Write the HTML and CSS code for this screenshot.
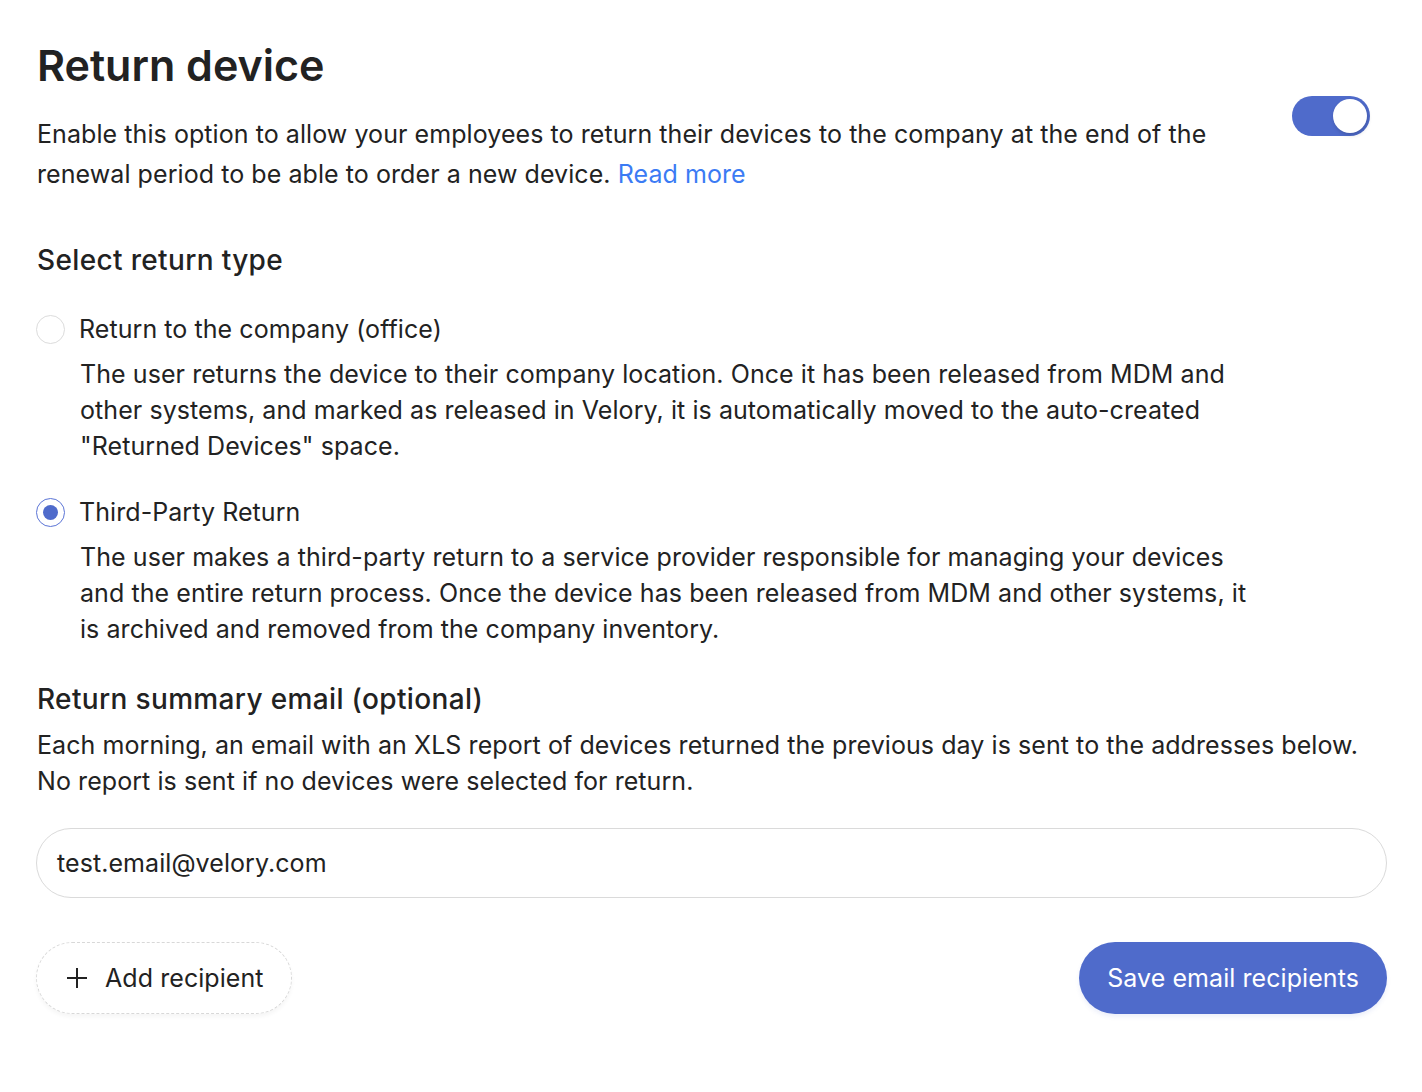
FILE: index.html
```html
<!DOCTYPE html>
<html lang="en">
<head>
<meta charset="utf-8">
<title>Return device</title>
<link rel="stylesheet" href="styles.css">
</head>
<body>
<main class="page">
  <h1 class="title">Return device</h1>
  <div class="intro">
    <p class="intro-text">Enable this option to allow your employees to return their devices to the company at the end of the renewal period to be able to order a new device. <a href="#" class="link">Read more</a></p>
    <span class="toggle on"><span class="knob"></span></span>
  </div>

  <h2 class="section-title">Select return type</h2>

  <div class="options">
    <div class="option">
      <div class="option-head">
        <span class="radio"></span>
        <span class="option-label">Return to the company (office)</span>
      </div>
      <p class="option-desc">The user returns the device to their company location. Once it has been released from MDM and other systems, and marked as released in Velory, it is automatically moved to the auto-created "Returned Devices" space.</p>
    </div>
    <div class="option">
      <div class="option-head">
        <span class="radio checked"></span>
        <span class="option-label">Third-Party Return</span>
      </div>
      <p class="option-desc">The user makes a third-party return to a service provider responsible for managing your devices and the entire return process. Once the device has been released from MDM and other systems, it is archived and removed from the company inventory.</p>
    </div>
  </div>

  <h2 class="section-title email-title">Return summary email (optional)</h2>
  <p class="email-text">Each morning, an email with an XLS report of devices returned the previous day is sent to the addresses below. No report is sent if no devices were selected for return.</p>

  <div class="input">test.email@velory.com</div>

  <div class="actions">
    <button class="btn-add" type="button">
      <svg class="plus" width="22" height="22" viewBox="0 0 22 22" aria-hidden="true"><path d="M11 1v20M1 11h20" stroke="#222" stroke-width="2" fill="none"/></svg>
      <span>Add recipient</span>
    </button>
    <button class="btn-save" type="button">Save email recipients</button>
  </div>
</main>
</body>
</html>
```
FILE: styles.css
```css
* { box-sizing: border-box; }
html, body { margin: 0; padding: 0; background: #fff; }
body {
  font-family: Inter, "Noto Sans", "Liberation Sans", sans-serif;
  color: #222;
}
.page {
  padding: 36px 35px 40px 37px;
}
.title {
  margin: 0;
  font-size: 43px;
  line-height: 58px;
  font-weight: 600;
  letter-spacing: 0;
}
.intro {
  display: flex;
  justify-content: space-between;
  align-items: flex-start;
  margin-top: 20px;
}
.intro-text {
  margin: 0;
  max-width: 1200px;
  font-size: 25px;
  letter-spacing: 0.07px;
  line-height: 40px;
}
.link { color: #3b7bf4; text-decoration: none; }
.toggle {
  flex: none;
  width: 78px;
  height: 40px;
  border-radius: 20px;
  background: #4f6bcb;
  display: flex;
  align-items: center;
  justify-content: flex-end;
  padding: 3px;
  margin-top: -18px;
  margin-right: 17px;
}
.knob {
  width: 34px;
  height: 34px;
  border-radius: 50%;
  background: #fff;
  box-shadow: 1px 2px 4px rgba(0,0,0,0.18);
}
.section-title {
  margin: 46px 0 0;
  font-size: 28px;
  letter-spacing: 0.35px;
  line-height: 40px;
  font-weight: 500;
}
.options {
  margin-top: 31px;
  display: flex;
  flex-direction: column;
  gap: 30px;
}
.option-head {
  display: flex;
  align-items: center;
  gap: 14px;
  margin-left: -1px;
}
.radio {
  width: 29px;
  height: 29px;
  border-radius: 50%;
  border: 1.5px solid #dcdcdc;
  background: #fff;
  display: flex;
  align-items: center;
  justify-content: center;
  flex: none;
}
.radio.checked { border-color: #5b74d6; }
.radio.checked::after {
  content: "";
  width: 15px;
  height: 15px;
  border-radius: 50%;
  background: #4f6bcb;
}
.option-label {
  font-size: 25px;
  letter-spacing: 0.07px;
  line-height: 36px;
}
.option-desc {
  margin: 9px 0 0 43px;
  max-width: 1180px;
  font-size: 25px;
  letter-spacing: 0.07px;
  line-height: 36px;
}
.email-title { margin-top: 32px; }
.email-text {
  margin: 8px 0 0;
  font-size: 25px;
  letter-spacing: 0.07px;
  line-height: 36px;
}
.input {
  margin-top: 29px;
  height: 70px;
  border: 1.5px solid #dadada;
  border-radius: 35px;
  display: flex;
  align-items: center;
  padding: 0 20px;
  font-size: 25px;
  letter-spacing: 0.07px;
  margin-left: -1px;
}
.actions {
  margin-top: 44px;
  display: flex;
  justify-content: space-between;
  align-items: center;
}
.btn-add {
  height: 72px;
  padding: 0 27px 0 29px;
  border: 1.5px dashed #d8d8d8;
  border-radius: 36px;
  background: #fff;
  display: flex;
  align-items: center;
  gap: 17px;
  font-family: inherit;
  font-size: 25px;
  letter-spacing: 0.07px;
  color: #222;
  box-shadow: 0 3px 4px rgba(0,0,0,0.04);
  margin-left: -1px;
}
.plus { flex: none; }
.btn-save {
  height: 72px;
  padding: 0 28px;
  border: none;
  border-radius: 36px;
  background: #4f6bcb;
  color: #fff;
  font-family: inherit;
  font-size: 25px;
  letter-spacing: 0.07px;
  box-shadow: 0 3px 4px rgba(79,107,203,0.1);
}
```
